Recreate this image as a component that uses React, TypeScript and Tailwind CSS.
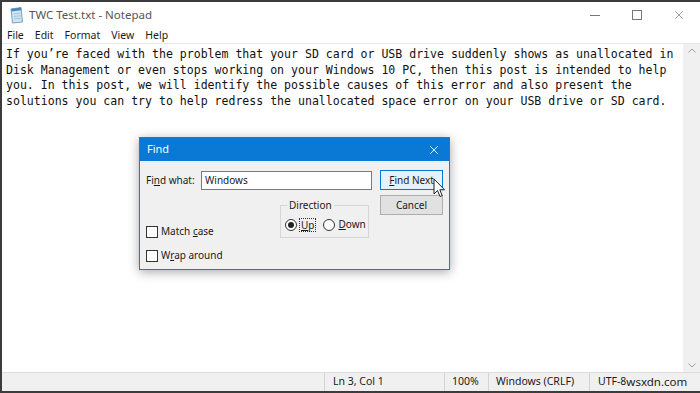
import { X } from 'lucide-react';

const ui = { fontFamily: '"Noto Sans", "Liberation Sans", Arial, sans-serif' };
const mono = { fontFamily: '"DejaVu Sans Mono", "Liberation Mono", monospace' };

const TEXT = [
  'If you’re faced with the problem that your SD card or USB drive suddenly shows as unallocated in',
  'Disk Management or even stops working on your Windows 10 PC, then this post is intended to help',
  'you. In this post, we will identify the possible causes of this error and also present the',
  'solutions you can try to help redress the unallocated space error on your USB drive or SD card.',
];

function NotepadIcon() {
  return (
    <svg width="16" height="18" viewBox="0 0 16 18">
      <path d="M3 3 L13 1.5 L14.5 16 L4.5 17 Z" fill="#cfe6f5" stroke="#5b8db5" strokeWidth="0.8" />
      <path d="M3 3 L13 1.5 L13.3 4.2 L3.3 5.6 Z" fill="#4f86b8" />
      <path d="M5.5 8 L12.5 7.2 M5.8 10.5 L12.8 9.7 M6 13 L13 12.2" stroke="#8fb3cf" strokeWidth="0.7" />
    </svg>
  );
}

function Cursor() {
  return (
    <svg width="14" height="21" viewBox="0 0 14 21" className="absolute left-[431px] top-[176px]">
      <path d="M1 1 L1 16 L4.5 12.5 L7 18.5 L9.2 17.6 L6.8 11.8 L11.5 11.8 Z" fill="#fff" stroke="#222" strokeWidth="1" strokeLinejoin="round" />
    </svg>
  );
}

function FindDialog() {
  return (
    <div
      className="absolute left-[137px] top-[135px] w-[311px] h-[133px] flex flex-col border border-[#1a7bd0] bg-[#f0f0f0] shadow-[0_2px_10px_rgba(0,0,0,0.35)] text-[10px] text-[#1a1a1a]"
      style={ui}
    >
      <div className="h-[23px] bg-[#0a78d5] flex items-center justify-between pl-[7px] pr-[8px] text-white text-[11px]">
        <span>Find</span>
        <X className="w-[14px] h-[14px]" strokeWidth={1.5} />
      </div>
      <div className="flex-1 flex pl-[6px] pr-[6px] pt-[10px]">
        <div className="flex flex-col w-[233px]">
          <div className="flex items-center h-[19px]">
            <span className="w-[55px]">Fi<u>n</u>d what:</span>
            <div className="w-[171px] h-[19px] bg-white border border-[#7a7a7a] flex items-center pl-[3px]">Windows</div>
          </div>
          <div className="flex mt-[15px]">
            <div className="flex flex-col w-[134px] pt-[19px] gap-[9px]">
              <label className="flex items-center gap-[3px]">
                <span className="w-[12px] h-[12px] bg-white border border-[#333]" />
                <span>Match <u>c</u>ase</span>
              </label>
              <label className="flex items-center gap-[3px]">
                <span className="w-[12px] h-[12px] bg-white border border-[#333]" />
                <span>W<u>r</u>ap around</span>
              </label>
            </div>
            <div className="relative w-[89px] h-[33px] border border-[#d6d6d6] flex items-center gap-[7px] pl-[4px] pt-[6px]">
              <span className="absolute left-[6px] -top-[8px] bg-[#f0f0f0] px-[2px]">Direction</span>
              <label className="flex items-center gap-[2px]">
                <span className="w-[12px] h-[12px] rounded-full bg-white border border-[#333] flex items-center justify-center">
                  <span className="w-[6px] h-[6px] rounded-full bg-[#222]" />
                </span>
                <span className="border border-dotted border-[#333] px-[1px] leading-[12px]"><u>U</u>p</span>
              </label>
              <label className="flex items-center gap-[3px]">
                <span className="w-[12px] h-[12px] rounded-full bg-white border border-[#333]" />
                <span><u>D</u>own</span>
              </label>
            </div>
          </div>
        </div>
        <div className="flex flex-col gap-[5px] ml-[7px] -mt-[1px]">
          <div className="w-[63px] h-[20px] bg-[#e5f1fb] border border-[#0078d7] flex items-center justify-center"><span><u>F</u>ind Next</span></div>
          <div className="w-[63px] h-[20px] bg-[#e1e1e1] border border-[#adadad] flex items-center justify-center">Cancel</div>
        </div>
      </div>
    </div>
  );
}

export default function App() {
  return (
    <div className="relative w-[700px] h-[393px] bg-white flex flex-col border-t-2 border-l-2 border-b-2 border-[#3c3c3c] overflow-hidden" style={ui}>
      {/* title bar */}
      <div className="h-[26px] flex items-center pl-[6px]">
        <NotepadIcon />
        <span className="ml-[5px] text-[11.5px] text-[#555]">TWC Test.txt - Notepad</span>
        <div className="ml-auto flex items-center h-full">
          <div className="w-[42px] flex justify-center"><span className="w-[10px] h-px bg-[#777]" /></div>
          <div className="w-[42px] flex justify-center"><span className="w-[10px] h-[10px] border border-[#777]" /></div>
          <div className="w-[42px] flex justify-center"><X className="w-[14px] h-[14px] text-[#777]" strokeWidth={1.2} /></div>
        </div>
      </div>

      {/* menu bar */}
      <div className="h-[16px] flex items-center gap-[11px] pl-[5px] text-[10.5px] text-[#1a1a1a] border-b border-[#e8e8e8]">
        <span>File</span>
        <span>Edit</span>
        <span>Format</span>
        <span>View</span>
        <span>Help</span>
      </div>

      {/* editor */}
      <div className="flex-1 flex min-h-0">
        <div className="flex-1 pl-[4px] pt-[3px] text-[11.55px] leading-[15.6px] text-[#111] whitespace-pre" style={mono}>
          {TEXT.map((l, i) => <div key={i}>{l}</div>)}
        </div>
        <div className="w-[17px] bg-[#f0f0f0] flex flex-col items-center justify-between py-[4px] text-[#a0a0a0]">
          <svg width="8" height="5" viewBox="0 0 8 5"><path d="M0.5 4.5 L4 1 L7.5 4.5" fill="none" stroke="currentColor" /></svg>
          <svg width="8" height="5" viewBox="0 0 8 5"><path d="M0.5 0.5 L4 4 L7.5 0.5" fill="none" stroke="currentColor" /></svg>
        </div>
      </div>

      {/* status bar */}
      <div className="h-[19px] bg-[#f0f0f0] border-t border-[#dcdcdc] flex items-center text-[10.5px] text-[#1a1a1a]">
        <div className="w-[322px]" />
        <div className="w-[120px] h-full border-l border-[#d4d4d4] flex items-center pl-[8px]">Ln 3, Col 1</div>
        <div className="w-[44px] h-full border-l border-[#d4d4d4] flex items-center pl-[7px]">100%</div>
        <div className="w-[101px] h-full border-l border-[#d4d4d4] flex items-center pl-[7px]">Windows (CRLF)</div>
        <div className="flex-1 h-full border-l border-[#d4d4d4] flex items-center pl-[8px]">
          <span>UTF-8</span>
          <span className="text-[11.5px] text-[#222]">wsxdn.com</span>
        </div>
      </div>

      <FindDialog />
      <Cursor />
    </div>
  );
}
